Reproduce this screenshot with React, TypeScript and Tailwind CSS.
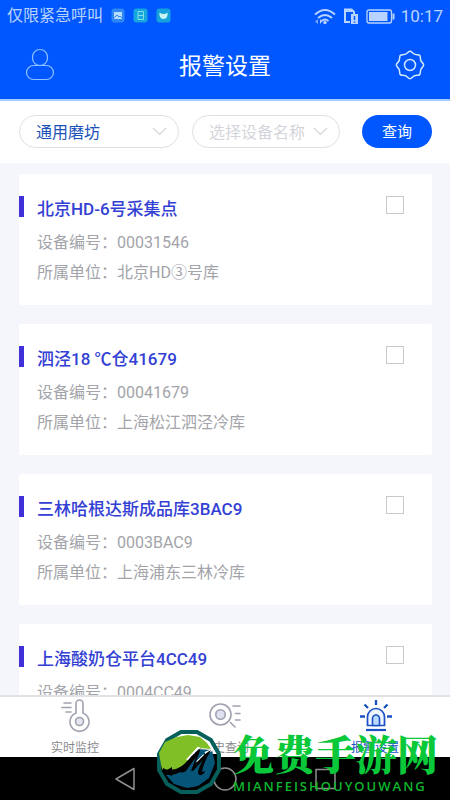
import React from 'react';

const devices = [
  { id: 1, name: '北京HD-6号采集点', code: '00031546', unit: '北京HD③号库' },
  { id: 2, name: '泗泾18 ℃仓41679', code: '00041679', unit: '上海松江泗泾冷库' },
  { id: 3, name: '三林哈根达斯成品库3BAC9', code: '0003BAC9', unit: '上海浦东三林冷库' },
  { id: 4, name: '上海酸奶仓平台4CC49', code: '0004CC49', unit: '上海酸奶仓平台' },
];

const point = (cx: number, cy: number, r: number, deg: number) => {
  const a = (deg * Math.PI) / 180;
  return [cx + r * Math.sin(a), cy - r * Math.cos(a)];
};

// eight soft teeth, drawn as curves between the midpoints of a star
const gearPath = () => {
  const pts = Array.from({ length: 16 }, (_, i) => point(15, 15, i % 2 ? 11 : 14.8, i * 22.5));
  const mid = (a: number[], b: number[]) => `${(a[0] + b[0]) / 2} ${(a[1] + b[1]) / 2}`;
  const start = mid(pts[15], pts[0]);
  const curves = pts.map((p, i) => `Q${p[0]} ${p[1]} ${mid(p, pts[(i + 1) % 16])}`);
  return `M${start}${curves.join('')}Z`;
};

const badge = Array.from({ length: 12 }, (_, i) => point(34, 34, 31, i * 30 + 15).join(','));

const StatusBar = () => (
  <div className="flex h-[31px] items-center justify-between px-[7px] text-[#b9d3ff]">
    <div className="flex items-center gap-2">
      <span className="text-base leading-5">仅限紧急呼叫</span>
      <svg width="60" height="15" viewBox="0 0 60 15" fill="none">
        <rect x="0.5" y="0.5" width="13" height="14" rx="3" fill="#2f86f5" />
        <rect x="3" y="4" width="8" height="7" fill="#b5dcff" />
        <path d="M3 10l3-3 2 2 1-1 2 2" stroke="#2f86f5" />
        <rect x="22.5" y="0.5" width="14" height="14" rx="3" fill="#16a5dc" />
        <path d="M27 3.5h5.500v8H27zM27 7.500h5.500" stroke="#7fe0e8" />
        <rect x="45.500" y="0.500" width="14" height="14" rx="3" fill="#16a0dc" />
        <path d="M48.500 4.500q4 3 8 0v3q-1 3.500-4 3.500t-4-3.500z" fill="#c9f4f4" />
      </svg>
    </div>
    <div className="flex items-center gap-1.5">
      <svg width="82" height="18" viewBox="0 0 82 18" fill="none">
        <path d="M2 7.500q10-9 20 0M5 11q7-6 14 0M8.500 14q3.500-3 7 0" stroke="currentColor" strokeWidth="1.800" />
        <circle cx="12" cy="15.500" r="1.700" fill="currentColor" />
        <path d="M5 12v5l-3-2.500z" fill="#73a8ff" />
        <path d="M7 12v5l2-2.500z" fill="currentColor" />
        <path d="M31 1.500h8l3 3V7h-2V5h-7v9h4v2h-6z" fill="currentColor" />
        <rect x="38" y="7" width="7" height="10" fill="currentColor" />
        <path d="M41.500 9v4M41.500 14.500v1.300" stroke="#0057ff" strokeWidth="1.500" />
        <rect x="54" y="3" width="24.500" height="13" rx="2" stroke="currentColor" strokeWidth="1.300" />
        <rect x="56" y="5" width="18.500" height="9" fill="currentColor" />
        <path d="M80.500 6.500v6" stroke="currentColor" strokeWidth="2" />
      </svg>
      <span className="text-[17px] leading-5">10:17</span>
    </div>
  </div>
);

const Header = () => (
  <header className="flex h-[70px] items-center justify-between border-b-2 border-[#a3cbff] px-6">
    <button type="button" aria-label="个人中心" className="flex w-8 justify-center">
      <svg width="30" height="34" viewBox="0 0 30 34" fill="none" stroke="#8ec1ff" strokeWidth="1.200">
        <rect x="7.500" y="1.500" width="15" height="16" rx="7.500" />
        <rect x="1.500" y="17.500" width="27" height="14" rx="7" />
      </svg>
    </button>
    <h1 className="pt-1 text-[23px] leading-8 text-white">报警设置</h1>
    <button type="button" aria-label="设置" className="flex w-8 justify-center">
      <svg width="30" height="30" viewBox="0 0 30 30" fill="none" stroke="#d3e6ff" strokeWidth="1.500">
        <path d={gearPath()} />
        <circle cx="15" cy="15" r="5.500" />
      </svg>
    </button>
  </header>
);

const Chevron = () => (
  <svg
    className="pointer-events-none absolute top-3 right-3"
    width="15"
    height="9"
    viewBox="0 0 15 9"
    fill="none"
    stroke="#d3d5da"
    strokeWidth="1.200"
  >
    <path d="M1 1l6.500 6.500L14 1" />
  </svg>
);

const Filters = () => (
  <form className="flex items-center bg-white pt-3.5 pr-[18px] pb-[15px] pl-[19px]">
    <div className="relative w-40">
      <select
        aria-label="单位"
        className="h-[33px] w-full appearance-none rounded-full border border-[#dfe0e4] bg-white pt-0.5 pl-4 text-base text-[#1c53b8] outline-none"
      >
        <option>通用磨坊</option>
      </select>
      <Chevron />
    </div>
    <div className="relative ml-[13px] flex-1">
      <select
        aria-label="设备名称"
        className="h-[33px] w-full appearance-none rounded-full border border-[#dfe0e4] bg-white pt-0.5 pl-4 text-base text-[#d3d5da] outline-none"
      >
        <option>选择设备名称</option>
      </select>
      <Chevron />
    </div>
    <button type="button" className="ml-[22px] h-[33px] w-[70px] rounded-full bg-[#0057ff] pt-0.5 text-[15px] text-white">
      查询
    </button>
  </form>
);

const NavItem = ({ label, active, children }: { label: string; active?: boolean; children: React.ReactNode }) => (
  <a
    href="#"
    className={`flex flex-col items-center text-[12px] leading-5 ${active ? 'text-[#1b50c4]' : 'text-[#8a8a8e]'}`}
  >
    <svg width="34" height="34" viewBox="0 0 34 34" fill="none" strokeWidth="1.600" strokeLinecap="round">
      {children}
    </svg>
    <span className="mt-[5px]">{label}</span>
  </a>
);

const TabBar = () => (
  <nav className="grid h-[62px] shrink-0 grid-cols-3 border-t-2 border-[#e2e2e5] bg-white pt-0.5">
    <NavItem label="实时监控">
      <g stroke="#a0a2b0">
        <path d="M6 4h7M4 8.500h9M8 13h5" />
        <path d="M18 14V4.500a3.500 3.500 0 0 1 7 0V14a9.500 9.500 0 1 1-7 0z" />
        <circle cx="21.500" cy="22.500" r="4" fill="#e3e5f1" />
      </g>
    </NavItem>
    <NavItem label="历史查询">
      <g stroke="#a0a2b0">
        <circle cx="12.500" cy="15.500" r="10.500" />
        <circle cx="12.500" cy="15.500" r="4.700" fill="#dfe1f1" />
        <path d="M25 7h7M27.500 14.500h4.500M27.500 21h4.500M22.500 23.500l4.500 4.500" />
      </g>
    </NavItem>
    <NavItem label="报警设置" active>
      <g stroke="#1b50c4" strokeWidth="2">
        <path d="M9.500 26.500V18a8.500 8.500 0 0 1 17 0v8.500z" fill="#edf4ff" strokeWidth="1.700" />
        <path d="M14.500 26.500v-7a3.500 3.500 0 0 1 7 0v7z" fill="#b9dbff" strokeWidth="1.600" />
        <path d="M8 31h20" strokeLinecap="butt" strokeWidth="2.200" />
        <path
          d="M18 1v5M6.500 5.500l3.500 3.500M29.500 5.500l-3.500 3.500M2 17.500h5M29 17.500h5"
          strokeLinecap="butt"
          strokeWidth="2.300"
        />
      </g>
    </NavItem>
  </nav>
);

const SystemBar = () => (
  <div className="grid h-[43px] shrink-0 grid-cols-3 justify-items-center bg-black px-[75px]">
    <button type="button" aria-label="返回">
      <svg width="24" height="26" viewBox="0 0 24 26" fill="none" stroke="#8f8f8f" strokeWidth="1.500">
        <path d="M21 2.500v21L3 13z" strokeLinejoin="round" />
      </svg>
    </button>
    <button type="button" aria-label="主页">
      <svg width="24" height="26" viewBox="0 0 24 26" fill="none" stroke="#8f8f8f" strokeWidth="1.500">
        <circle cx="12" cy="13" r="11" />
      </svg>
    </button>
    <button type="button" aria-label="最近任务">
      <svg width="24" height="26" viewBox="0 0 24 26" fill="none" stroke="#8f8f8f" strokeWidth="1.500">
        <rect x="3" y="3.500" width="19" height="19" />
      </svg>
    </button>
  </div>
);

const Watermark = () => (
  <div className="pointer-events-none absolute right-3 bottom-1 flex items-end gap-2.5">
    <svg width="68" height="68" viewBox="0 0 68 68">
      <polygon points={badge.join(' ')} fill="#fff" />
      <polygon points={badge.slice(2, 10).join(' ')} fill="#000" />
      <polygon points={badge.join(' ')} fill="none" stroke="#075f5c" strokeWidth="4" strokeLinejoin="round" />
      <path d="M22 9l11-2 12 2 7 6 4 6-11-1-6 5-6 8-9 8-17 1-3-17 6-11z" fill="#80bf26" />
      <path d="M43 21l14 1 3 13-6 15-11 8-11 2-13-4-8-9 10-1 9-5z" fill="#055579" />
      <path d="M32 32l11-12 3 1M42 34l7-7M50 25l7-3" fill="none" stroke="#fff" strokeWidth="2" />
      <path
        d="M7 44l1-4 4 2 5-3v4l8-4c6-3 9-9 14-13 2-3 5-4 7-6l-6 16 6-6c3-3 6-6 10-8-4 7-8 15-9 22l3-1c-1 4-6 6-7 2 0-4 3-9 5-13L38 43h-2l5-14-10 14c-4 3-8 0-11 2l-4 3c-2-3-6-1-9-4z"
        fill="#000"
      />
    </svg>
    <div className="text-[#09c83a]">
      <div className="font-['Noto_Serif_CJK_SC','Noto_Sans_CJK_SC',serif] text-[41px] leading-[46px] font-black">
        免费手游网
      </div>
      <div className="font-['Open_Sans','Noto_Sans',sans-serif] text-[13px] leading-5 font-semibold tracking-[2px] text-[#0db52e]">
        MIANFEISHOUYOUWANG
      </div>
    </div>
  </div>
);

const App = () => {
  return (
    <div className="relative flex h-screen flex-col overflow-hidden bg-[#f5f6fb] font-[Roboto,'Noto_Sans_CJK_SC',sans-serif]">
      <div className="shrink-0 bg-[#0057ff]">
        <StatusBar />
        <Header />
      </div>
      <Filters />
      <main className="min-h-0 flex-1 overflow-hidden pt-[11px] pr-[18px] pl-[19px]">
        <ul className="flex flex-col gap-[19px]">
          {devices.map((device) => (
            <li key={device.id} className="rounded-xs bg-white pt-[22px] pb-[17px]">
              <div className="flex items-start">
                <span className="h-[21px] w-[5px] bg-[#4030d9]" />
                <label
                  htmlFor={`device-${device.id}`}
                  className="ml-[13px] flex-1 text-[17px] leading-[26px] font-medium text-[#3340d4]"
                >
                  {device.name}
                </label>
                <input
                  id={`device-${device.id}`}
                  type="checkbox"
                  className="mr-7 size-[18px] appearance-none border border-[#c9c9c9] bg-white checked:bg-[#0057ff]"
                />
              </div>
              <div className="mt-1.5 pl-[18px] text-base leading-[30px] text-[#a3a4a9]">
                <p>设备编号：{device.code}</p>
                <p>所属单位：{device.unit}</p>
              </div>
            </li>
          ))}
        </ul>
      </main>
      <TabBar />
      <SystemBar />
      <Watermark />
    </div>
  );
};

export default App;
